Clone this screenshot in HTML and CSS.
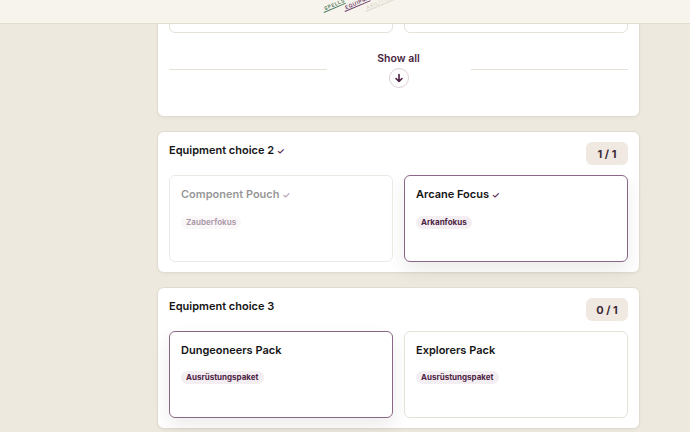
FILE: index.html
```html
<!DOCTYPE html>
<html lang="en">
<head>
    <meta charset="UTF-8">
    <meta name="viewport" content="width=device-width, initial-scale=1.0">
    <title>Equipment choices</title>
    <link rel="stylesheet" href="styles.css">
</head>
<body>

    <header class="topbar">
        <span class="tab tab-spells">SPELLS</span>
        <span class="tab tab-equip">EQUIPMENT</span>
        <span class="tab tab-abil">ABILITIES</span>
    </header>

    <main class="choices">
        <section class="panel panel-cut">
            <div class="cards">
                <div class="card"></div>
                <div class="card"></div>
            </div>
            <div class="show-all">
                <span class="rule"></span>
                <button class="show-btn">
                    <span>Show all</span>
                    <span class="arrow">
                        <svg width="10" height="10" viewBox="0 0 10 10"><path d="M5 1.5v7M2 5.5l3 3 3-3" fill="none" stroke="#4a1f40" stroke-width="1.6" stroke-linecap="round" stroke-linejoin="round"/></svg>
                    </span>
                </button>
                <span class="rule"></span>
            </div>
        </section>

        <section class="panel">
            <div class="panel-head">
                <h2>Equipment choice 2 <span class="tick">✓</span></h2>
                <span class="count">1 / 1</span>
            </div>
            <div class="cards">
                <div class="card dimmed">
                    <h3>Component Pouch <span class="tick">✓</span></h3>
                    <span class="tag">Zauberfokus</span>
                </div>
                <div class="card picked">
                    <h3>Arcane Focus <span class="tick">✓</span></h3>
                    <span class="tag">Arkanfokus</span>
                </div>
            </div>
        </section>

        <section class="panel">
            <div class="panel-head">
                <h2>Equipment choice 3</h2>
                <span class="count">0 / 1</span>
            </div>
            <div class="cards">
                <div class="card picked">
                    <h3>Dungeoneers Pack</h3>
                    <span class="tag">Ausrüstungspaket</span>
                </div>
                <div class="card">
                    <h3>Explorers Pack</h3>
                    <span class="tag">Ausrüstungspaket</span>
                </div>
            </div>
        </section>
    </main>

</body>
</html>
```

FILE: styles.css
```css
* {
    box-sizing: border-box;
}
body {
    margin: 0;
    font-family: Inter, "Noto Sans", sans-serif;
    background-color: #ede9df;
    color: #141414;
    overflow: hidden;
    height: 432px;
}
.topbar {
    position: fixed;
    top: 0;
    left: 0;
    right: 0;
    height: 24px;
    background: #f7f4ed;
    border-bottom: 1px solid #e3ddd0;
    z-index: 5;
    overflow: hidden;
}
/* little slanted tabs peeking out of the bar */
.tab {
    position: absolute;
    height: 7px;
    font-size: 5px;
    line-height: 6px;
    letter-spacing: 0.6px;
    font-weight: 600;
    padding: 0 2px;
    border-bottom: 1px solid;
    transform: rotate(-23deg);
    transform-origin: left bottom;
    white-space: nowrap;
}
.tab-spells { color: #4f7a5d; left: 324px; top: 6px; width: 24px; }
.tab-equip { color: #6b3d68; left: 345px; top: 5px; width: 28px; }
.tab-abil { color: #ddd7cc; left: 366px; top: 5px; width: 32px; }

.choices {
    width: 483px;
    margin: -65px 0 0 157px;
    display: flex;
    flex-direction: column;
    gap: 14px;
}
.panel {
    background: white;
    border: 1px solid #e2dcd0;
    border-radius: 7px;
    padding: 10px 11px;
    box-shadow: 0 1px 3px rgba(90, 70, 40, 0.05);
}
.panel-head {
    display: flex;
    justify-content: space-between;
    align-items: flex-start;
    height: 23px;
    margin-bottom: 10px;
}
h2 {
    margin: 0;
    padding-top: 1px;
    font-size: 11px;
    line-height: 14px;
    font-weight: 600;
}
.count {
    width: 42px;
    height: 23px;
    border-radius: 6px;
    background: #efe9e2;
    color: #3d2b36;
    font-size: 11px;
    font-weight: 700;
    display: flex;
    justify-content: center;
    align-items: center;
}
.tick {
    color: #5a2a52;
    font-size: 9px;
    font-weight: 600;
}
.cards {
    display: grid;
    grid-template-columns: 1fr 1fr;
    gap: 11px;
}
.card {
    height: 87px;
    border: 1px solid #e6e1d9;
    border-radius: 6px;
    padding: 10px 11px;
    background: white;
    display: flex;
    flex-direction: column;
    align-items: flex-start;
}
.card h3 {
    margin: 0 0 13px;
    font-size: 11px;
    line-height: 16px;
    font-weight: 600;
}
.card.picked {
    border-color: #8a6787;
    box-shadow: 0 8px 18px rgba(60, 40, 30, 0.09);
}
.card.dimmed {
    opacity: 0.45;
    border-color: #d8d2c8;
}
.tag {
    background: #f3eef1;
    color: #4e2445;
    font-size: 8px;
    font-weight: 700;
    line-height: 13px;
    padding: 0 5px;
    border-radius: 7px;
}

.show-all {
    display: grid;
    grid-template-columns: 1fr 144px 1fr;
    align-items: center;
    margin: 18px 0;
}
.rule {
    height: 1px;
    background: #e6e0d6;
}
.show-btn {
    border: none;
    background: none;
    padding: 0;
    font: inherit;
    font-size: 10.5px;
    font-weight: 600;
    color: #4a1f40;
    display: flex;
    flex-direction: column;
    align-items: center;
    gap: 1px;
    line-height: 16px;
    cursor: pointer;
}
.arrow {
    width: 20px;
    height: 20px;
    border: 1px solid #ddd0d8;
    border-radius: 50%;
    display: flex;
    justify-content: center;
    align-items: center;
}
```
